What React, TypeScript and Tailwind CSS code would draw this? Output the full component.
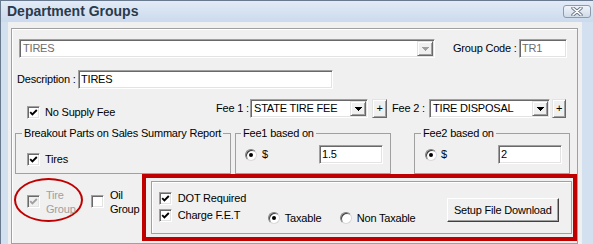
import React from 'react';

const sunken =
  'border border-t-[#a0a0a0] border-l-[#a0a0a0] border-r-white border-b-white shadow-[inset_1px_1px_0_#696969,inset_-1px_-1px_0_#e3e3e3]';
const raised =
  'border border-t-[#e3e3e3] border-l-[#e3e3e3] border-r-[#696969] border-b-[#696969] shadow-[inset_1px_1px_0_#fff,inset_-1px_-1px_0_#a0a0a0] bg-[#f0f0f0]';

const CheckBox: React.FC<{ checked?: boolean; disabled?: boolean }> = ({ checked = false, disabled = false }) => (
  <span
    className={`flex h-[13px] w-[13px] shrink-0 items-center justify-center ${sunken} ${
      disabled ? 'bg-[#f0f0f0]' : 'bg-white'
    }`}
  >
    {checked && (
      <svg width="9" height="9" viewBox="0 0 9 9">
        <path
          d="M1.2 4.2 L3.4 6.4 L7.8 2"
          fill="none"
          stroke={disabled ? '#a0a0a0' : '#000'}
          strokeWidth="1.9"
        />
      </svg>
    )}
  </span>
);

const Radio: React.FC<{ selected?: boolean }> = ({ selected = false }) => (
  <span className="flex h-[12px] w-[12px] shrink-0 items-center justify-center rounded-full border border-t-[#808080] border-l-[#808080] border-r-[#d8d8d8] border-b-[#d8d8d8] bg-white shadow-[inset_1px_1px_0_#404040]">
    {selected && <span className="h-[4px] w-[4px] rounded-full bg-black" />}
  </span>
);

const TextBox: React.FC<{ value: string; className: string; muted?: boolean }> = ({ value, className, muted }) => (
  <div className={`flex h-[19px] items-center bg-white pl-[2px] ${sunken} ${className} ${muted ? 'text-[#6d6d6d]' : ''}`}>
    {value}
  </div>
);

const Combo: React.FC<{ value: string; className: string; disabled?: boolean }> = ({ value, className, disabled }) => (
  <div className={`flex h-[19px] items-center bg-white ${sunken} ${className}`}>
    <span className={`flex-1 pl-[3px] ${disabled ? 'text-[#6d6d6d]' : ''}`}>{value}</span>
    <span className={`mr-[1px] flex h-[15px] w-[16px] items-center justify-center ${raised}`}>
      <svg width="7" height="4" viewBox="0 0 7 4" shapeRendering="crispEdges">
        <polygon points="0,0 7,0 3.5,4" fill={disabled ? '#a0a0a0' : '#000'} />
      </svg>
    </span>
  </div>
);

const PlusButton: React.FC<{ className: string }> = ({ className }) => (
  <span className={`flex h-[19px] items-center justify-center leading-none ${raised} ${className}`}>+</span>
);

const GroupBox: React.FC<{ title: string; className: string; legendClass: string; children: React.ReactNode }> = ({
  title,
  className,
  legendClass,
  children,
}) => (
  <fieldset className={`h-[47px] border border-[#a0a0a0] ${className}`}>
    <legend className={`px-[2px] leading-[13px] ${legendClass}`}>{title}</legend>
    {children}
  </fieldset>
);

export default function App() {
  return (
    <div className="flex h-[244px] w-[593px] flex-col overflow-hidden border-l border-t border-[#6a7a8e] bg-[#d3e0f0] font-['Liberation_Sans',Arial,sans-serif] text-[11px] tracking-[-0.2px] text-black">
      {/* Title bar */}
      <div className="flex h-[21px] shrink-0 items-center bg-linear-to-b from-[#e2ebf6] to-[#cbdaed]">
        <span className="ml-[6px] text-[14px] font-bold tracking-normal text-[#2a3a4c]">Department Groups</span>
        <span className="ml-auto mr-[2px] flex h-[13px] w-[28px] items-center justify-center rounded-[3px] border border-[#8d9aab] bg-linear-to-b from-[#f1f5fa] to-[#cfdae8]">
          <svg width="12" height="9" viewBox="0 0 12 9">
            <path d="M2 1 L10 8 M10 1 L2 8" stroke="#6b788a" strokeWidth="3.4" strokeLinecap="round" />
            <path d="M2 1 L10 8 M10 1 L2 8" stroke="#fff" strokeWidth="1.6" strokeLinecap="round" />
          </svg>
        </span>
      </div>

      {/* Window body */}
      <div className="ml-[7px] flex w-[574px] flex-1 flex-col bg-[#f0f0f0]">
        <div className="ml-[3px] mt-[6px] flex w-[567px] flex-1 flex-col border border-[#a0a0a0] shadow-[inset_1px_1px_0_#fff]">
          {/* Department / group code */}
          <div className="mt-[10px] flex h-[19px] items-center">
            <Combo value="TIRES" disabled className="ml-[7px] w-[416px]" />
            <span className="ml-[18px] w-[66px]">Group Code :</span>
            <TextBox value="TR1" muted className="w-[48px]" />
          </div>

          {/* Description */}
          <div className="mt-[12px] flex h-[19px] items-center">
            <span className="ml-[5px] w-[61px]">Description :</span>
            <TextBox value="TIRES" className="w-[255px]" />
          </div>

          {/* Fees */}
          <div className="mt-[10px] flex h-[19px] items-center">
            <div className="ml-[15px] mt-[5px] flex w-[189px] items-center gap-[5px] self-start">
              <CheckBox checked />
              <span>No Supply Fee</span>
            </div>
            <span className="w-[34px]">Fee 1 :</span>
            <Combo value="STATE TIRE FEE" className="w-[118px]" />
            <PlusButton className="ml-[4px] w-[15px]" />
            <span className="ml-[5px] w-[37px]">Fee 2 :</span>
            <Combo value="TIRE DISPOSAL" className="w-[121px]" />
            <PlusButton className="ml-[2px] w-[14px]" />
          </div>

          {/* Group boxes */}
          <div className="mt-[9px] flex">
            <GroupBox title="Breakout Parts on Sales Summary Report" className="ml-[3px] w-[216px]" legendClass="ml-[6px]">
              <div className="ml-[11px] mt-[11px] flex items-center gap-[5px]">
                <CheckBox checked />
                <span>Tires</span>
              </div>
            </GroupBox>
            <GroupBox title="Fee1 based on" className="ml-[4px] w-[156px]" legendClass="ml-[5px]">
              <div className="mt-[5px] flex h-[19px] items-center">
                <div className="ml-[9px] flex w-[74px] items-center gap-[5px]">
                  <Radio selected />
                  <span>$</span>
                </div>
                <TextBox value="1.5" className="w-[64px]" />
              </div>
            </GroupBox>
            <GroupBox title="Fee2 based on" className="ml-[23px] w-[156px]" legendClass="ml-[6px]">
              <div className="mt-[5px] flex h-[19px] items-center">
                <div className="ml-[10px] flex w-[73px] items-center gap-[4px]">
                  <Radio selected />
                  <span>$</span>
                </div>
                <TextBox value="2" className="w-[64px]" />
              </div>
            </GroupBox>
          </div>

          {/* Tire / oil group and highlighted options */}
          <div className="flex items-start">
            <div className="ml-[2px] mt-[4px] flex h-[44px] w-[69px] items-center rounded-[50%] border-2 border-[#c00000]">
              <div className="ml-[11px] mt-[3px] flex items-center">
                <CheckBox checked disabled />
                <span className="ml-[6px] leading-[14px] text-[#a0a0a0]">
                  Tire
                  <br />
                  Group
                </span>
              </div>
            </div>
            <div className="ml-[8px] mt-[4px] flex h-[44px] w-[51px] items-center">
              <div className="mt-[3px] flex items-center">
                <CheckBox />
                <span className="ml-[6px] leading-[14px]">
                  Oil
                  <br />
                  Group
                </span>
              </div>
            </div>
            <div className="h-[67px] w-[436px] border-4 border-[#c00000]">
              <div className="ml-[5px] mt-[3px] flex h-[53px] w-[421px] items-start border border-[#a0a0a0] shadow-[inset_1px_1px_0_#fff]">
                <div className="ml-[7px] mt-[10px] flex w-[109px] flex-col gap-[4px]">
                  <div className="flex h-[13px] items-center gap-[6px]">
                    <CheckBox checked />
                    <span>DOT Required</span>
                  </div>
                  <div className="flex h-[13px] items-center gap-[6px]">
                    <CheckBox checked />
                    <span>Charge F.E.T</span>
                  </div>
                </div>
                <div className="mt-[28px] flex w-[179px] items-center">
                  <div className="flex w-[72px] items-center gap-[5px]">
                    <Radio selected />
                    <span>Taxable</span>
                  </div>
                  <div className="flex items-center gap-[5px]">
                    <Radio />
                    <span>Non Taxable</span>
                  </div>
                </div>
                <button className="mt-[16px] h-[24px] w-[112px] border border-t-white border-l-white border-r-[#404040] border-b-[#404040] bg-[#f0f0f0] shadow-[inset_-1px_-1px_0_#a0a0a0]">
                  Setup File Download
                </button>
              </div>
            </div>
          </div>
        </div>
      </div>
    </div>
  );
}
